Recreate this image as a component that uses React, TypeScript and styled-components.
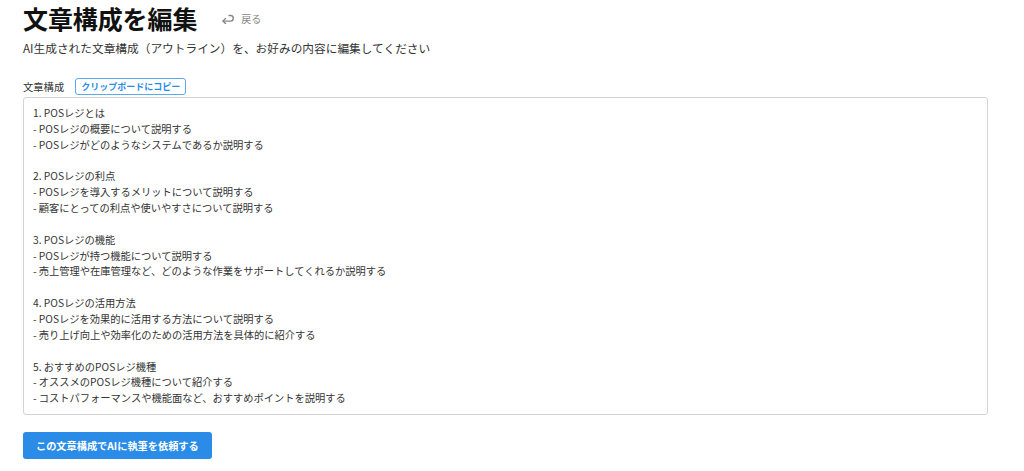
import React from "react";
import styled, { createGlobalStyle } from "styled-components";

const Global = createGlobalStyle`
  html, body { margin: 0; padding: 0; background: #fff; }
  body { font-family: "Noto Sans CJK JP", "Noto Sans", sans-serif; color: #333; }
`;

const Page = styled.div`
  padding: 0 0 0 23px;
  width: 965px;
`;

const TitleRow = styled.div`
  display: flex;
  align-items: center;
  height: 36px;
`;

const Title = styled.h1`
  margin: 0;
  font-size: 25px;
  font-weight: 700;
  color: #111;
  line-height: 36px;
  letter-spacing: -0.1px;
`;

const Back = styled.a`
  display: flex;
  align-items: center;
  gap: 7px;
  margin-left: 24px;
  margin-top: 1px;
  font-size: 10px;
  color: #888;
  text-decoration: none;
  cursor: pointer;
`;

const Lead = styled.p`
  margin: 4px 0 0;
  font-size: 11.7px;
  line-height: 16px;
  color: #333;
`;

const LabelRow = styled.div`
  display: flex;
  align-items: center;
  gap: 11px;
  margin-top: 21px;
  height: 18px;
`;

const Label = styled.span`
  font-size: 10.3px;
  color: #333;
`;

const CopyButton = styled.button`
  font-family: inherit;
  font-size: 9px;
  font-weight: 700;
  color: #2a8ce6;
  background: #fff;
  border: 1px solid #5aa8ee;
  border-radius: 3px;
  padding: 0 5px;
  height: 17px;
  line-height: 15px;
  cursor: pointer;
`;

const Editor = styled.textarea`
  display: block;
  box-sizing: border-box;
  margin-top: 2px;
  width: 965px;
  height: 318px;
  padding: 7px 9px;
  font-family: inherit;
  font-size: 10.25px;
  line-height: 15.85px;
  color: #333;
  border: 1px solid #d4d4d4;
  border-radius: 3px;
  resize: none;
  overflow: hidden;
  outline: none;
`;

const Submit = styled.button`
  margin-top: 17px;
  height: 27px;
  padding: 0 13px;
  font-family: inherit;
  font-size: 10.2px;
  font-weight: 700;
  color: #fff;
  background: #2a8ce6;
  border: none;
  border-radius: 3px;
  cursor: pointer;
`;

const outline = `1. POSレジとは
- POSレジの概要について説明する
- POSレジがどのようなシステムであるか説明する

2. POSレジの利点
- POSレジを導入するメリットについて説明する
- 顧客にとっての利点や使いやすさについて説明する

3. POSレジの機能
- POSレジが持つ機能について説明する
- 売上管理や在庫管理など、どのような作業をサポートしてくれるか説明する

4. POSレジの活用方法
- POSレジを効果的に活用する方法について説明する
- 売り上げ向上や効率化のための活用方法を具体的に紹介する

5. おすすめのPOSレジ機種
- オススメのPOSレジ機種について紹介する
- コストパフォーマンスや機能面など、おすすめポイントを説明する`;

const BackIcon = () => (
  <svg width="13" height="11" viewBox="0 0 13 11" fill="none" stroke="#888" strokeWidth="1.4" strokeLinecap="round" strokeLinejoin="round">
    <path d="M8 2.5h1.5a2.8 2.8 0 0 1 0 5.6H2" />
    <path d="M4.5 5.6L2 8.1l2.5 2.5" />
  </svg>
);

export default function App() {
  return (
    <>
      <Global />
      <Page>
        <TitleRow>
          <Title>文章構成を編集</Title>
          <Back>
            <BackIcon />
            戻る
          </Back>
        </TitleRow>
        <Lead>AI生成された文章構成（アウトライン）を、お好みの内容に編集してください</Lead>
        <LabelRow>
          <Label>文章構成</Label>
          <CopyButton>クリップボードにコピー</CopyButton>
        </LabelRow>
        <Editor defaultValue={outline} spellCheck={false} />
        <Submit>この文章構成でAIに執筆を依頼する</Submit>
      </Page>
    </>
  );
}
